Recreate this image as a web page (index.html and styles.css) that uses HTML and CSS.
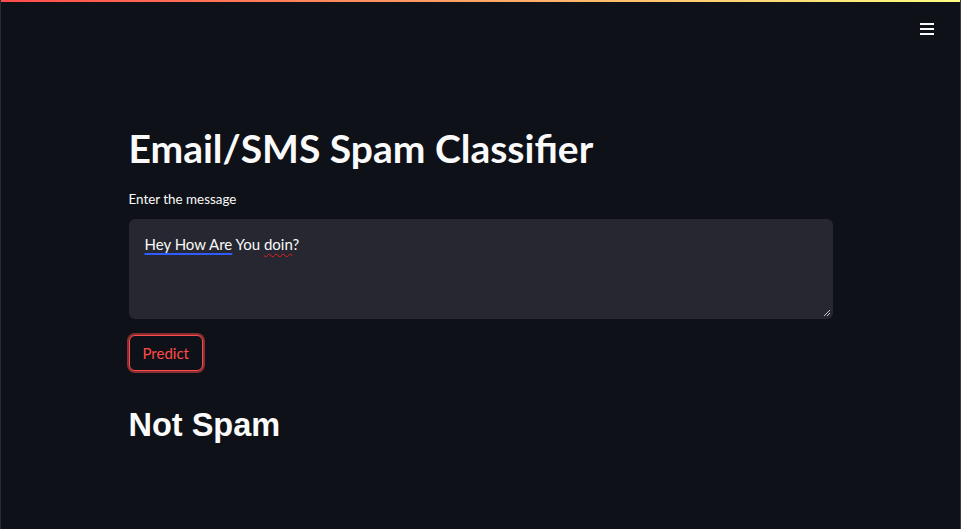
FILE: index.html
```html
<!DOCTYPE html>
<html lang="en">
<head>
<meta charset="utf-8">
<title>Email/SMS Spam Classifier</title>
<link rel="stylesheet" href="styles.css">
</head>
<body>
<div class="app">
  <div class="decoration"></div>
  <header class="toolbar">
    <button class="menu" aria-label="Main menu">
      <svg width="14" height="14" viewBox="0 0 14 14" aria-hidden="true">
        <rect x="0" y="1" width="14" height="2" fill="#fafafa"/>
        <rect x="0" y="6" width="14" height="2" fill="#fafafa"/>
        <rect x="0" y="11" width="14" height="2" fill="#fafafa"/>
      </svg>
    </button>
  </header>
  <main class="block">
    <h1 class="title">Email/SMS Spam Classifier</h1>
    <label class="label">Enter the message</label>
    <div class="textarea">
      <span class="grammar">Hey How Are</span> You <span class="spell">doin</span>?
      <svg class="grip" width="8" height="8" viewBox="0 0 8 8" aria-hidden="true">
        <path d="M7 1 L1 7 M7 4 L4 7" stroke="#c8c8c8" stroke-width="1" fill="none"/>
      </svg>
    </div>
    <div class="actions">
      <button class="btn">Predict</button>
    </div>
    <h1 class="result">Not Spam</h1>
  </main>
</div>
</body>
</html>
```
FILE: styles.css
```css
html, body {
  margin: 0;
  padding: 0;
  height: 100%;
  background: #0e1117;
}
body {
  color: #fafafa;
  font-family: "Lato", "Open Sans", sans-serif;
}
.app {
  position: relative;
  min-height: 100%;
  box-sizing: border-box;
  border-left: 1px solid #2a2c33;
  border-right: 1px solid #3a3b40;
}
.decoration {
  height: 2px;
  background: linear-gradient(90deg, #ff4b4b, #ffff80);
}
.toolbar {
  display: flex;
  justify-content: flex-end;
  padding: 20px 26px 0 0;
  height: 16px;
}
.menu {
  background: none;
  border: none;
  padding: 0;
  margin: 0;
  width: 14px;
  height: 14px;
  display: block;
}
.menu svg { display: block; }
.block {
  max-width: 704px;
  margin: 0 auto;
  padding: 84px 0 0;
}
.title {
  margin: 0;
  font-family: "Lato", sans-serif;
  font-weight: 700;
  font-size: 39px;
  line-height: 52px;
  letter-spacing: 0;
}
.label {
  display: block;
  margin-top: 16px;
  font-size: 13.4px;
  line-height: 18px;
  font-weight: 400;
}
.textarea {
  position: relative;
  margin-top: 11px;
  height: 100px;
  box-sizing: border-box;
  padding: 14px 16px;
  background: #262730;
  border-radius: 6px;
  font-size: 15px;
  line-height: 22px;
}
.grammar {
  text-decoration: underline;
  text-decoration-color: #2f5cff;
  text-decoration-thickness: 2px;
  text-underline-offset: 3px;
}
.spell {
  text-decoration: underline wavy #e02020;
  text-decoration-thickness: 1px;
  text-underline-offset: 3px;
}
.grip {
  position: absolute;
  right: 2px;
  bottom: 2px;
}
.actions {
  margin-top: 16px;
  display: flex;
}
.btn {
  font-family: "Lato", sans-serif;
  font-size: 15px;
  color: #ff4b4b;
  background: #0e1117;
  border: 1px solid #ff4b4b;
  border-radius: 6px;
  box-shadow: 0 0 0 2px rgba(255, 75, 75, 0.5);
  padding: 0 13px;
  height: 36px;
  margin: 0;
}
.result {
  margin: 34px 0 0;
  font-family: "Liberation Sans", Arial, sans-serif;
  font-weight: 700;
  font-size: 32.5px;
  line-height: 40px;
}
```
